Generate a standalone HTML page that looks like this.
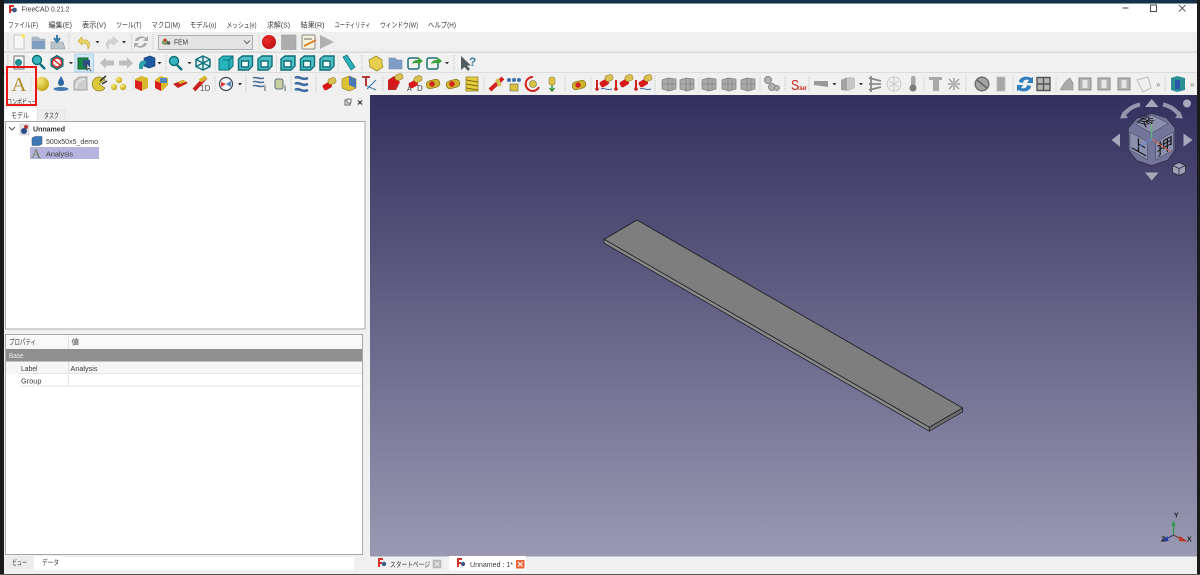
<!DOCTYPE html>
<html lang="ja"><head><meta charset="utf-8"><title>FreeCAD 0.21.2</title>
<style>
html,body{margin:0;padding:0;background:#fff;width:1200px;height:575px;overflow:hidden}
svg{display:block;filter:blur(.35px)}
text{font-family:"Liberation Sans","Noto Sans CJK JP",sans-serif;font-size:7.5px;fill:#3a3a3a}
</style></head><body>
<svg width="1200" height="575" viewBox="0 0 1200 575" xmlns="http://www.w3.org/2000/svg">
<defs>
<linearGradient id="bg" x1="0" y1="0" x2="0" y2="1"><stop offset="0" stop-color="#34305e"/><stop offset="1" stop-color="#9a99b2"/></linearGradient>
<radialGradient id="yb" cx=".35" cy=".3" r=".8"><stop offset="0" stop-color="#f6e97a"/><stop offset="1" stop-color="#c0a010"/></radialGradient>
<radialGradient id="rb" cx=".4" cy=".35" r=".8"><stop offset="0" stop-color="#ee2a2a"/><stop offset="1" stop-color="#b01010"/></radialGradient>
<g id="tealcube" fill="none" stroke="#0d6f78" stroke-width="1.400"><path d="M-7-4-3-7H7V3L3 7H-7Z" fill="#4fbfc6"/><path d="M-4-2H3V4H-4Z" fill="#f2fafa"/></g>
<g id="tealfull"><path d="M-7-4-3-7H7V3L3 7H-7Z" fill="#27b5bd" stroke="#0d6f78"/><path d="M3-3H-3M3-3V7M3-3 7-7" stroke="#0d6f78" fill="none"/></g>
<g id="zoomg"><circle cx="-1" cy="-2" r="4.500" fill="#37b6bd" stroke="#0d6f78" stroke-width="1.400"/><path d="M2 2 7 7" stroke="#0d6f78" stroke-width="2.400"/></g>
<g id="drop"><path d="M-2-1H2L0 1.400Z" fill="#333"/></g>
<g id="sep"><path d="M0-8V8" stroke="#c4c4c4" stroke-dasharray="1 1"/></g>
<g id="vs"><path d="M0-8V8" stroke="#dcdcdc"/></g>
<g id="yred"><rect x="-7" y="-2" width="9" height="6" rx="2" fill="#d81818" transform="rotate(-30)"/><rect x="-1" y="-6" width="8" height="6" rx="2.400" fill="#d9c050" stroke="#8a7a20" stroke-width=".5" transform="rotate(-20 3 -3)"/></g>
<g id="cyl"><rect x="-7" y="-4" width="14" height="8" rx="4" fill="#cfb22c" stroke="#7a6a18" stroke-width=".6" transform="rotate(-15)"/><circle cx="-1" r="2.700" fill="#d42020"/></g>
<g id="grayblk"><path d="M-7-4-1-6 7-5V5L0 7-7 5Z" fill="#a9a9a9" stroke="#808080" stroke-width=".7"/><path d="M-1-6V7M-7 0 7 0M3-5V6" stroke="#777" stroke-width=".6" fill="none"/></g>
<g id="gcyl"><path d="M-6-6H6V6H-6Z" fill="#b3b3b3" stroke="#888"/><rect x="-2.500" y="-4" width="5" height="8" fill="#e6e6e6"/></g>
</defs>

<rect width="1200" height="575" fill="#f0f0f0"/>
<rect width="1200" height="3.500" fill="#16304a"/>
<rect x="0" y="0" width="4" height="575" fill="#1a1a1a"/>
<rect x="1197" width="3" height="575" fill="#1b1b1b"/>
<rect y="574" width="1200" height="1" fill="#555"/>
<rect x="4" y="4" width="1193" height="28" fill="#fff"/>

<!-- titlebar -->
<path d="M9 5H14V7H11V9H13V11H11V13H9Z" fill="#d2322a"/>
<circle cx="14.500" cy="10" r="2.400" fill="#3b5a86"/>
<text x="21.500" y="11.500" textLength="48" lengthAdjust="spacingAndGlyphs">FreeCAD 0.21.2</text>
<path d="M1122.500 8H1128.500" stroke="#555" stroke-width="1.100"/>
<rect x="1150.500" y="5" width="6" height="6.500" fill="none" stroke="#555" stroke-width="1.100"/>
<path d="M1179 5 1185.500 11.500M1185.500 5 1179 11.500" stroke="#555" stroke-width=".9"/>

<!-- menu -->
<text x="8" y="27.500" textLength="30" lengthAdjust="spacingAndGlyphs">ファイル(F)</text>
<text x="48.500" y="27.500" textLength="23.500" lengthAdjust="spacingAndGlyphs">編集(E)</text>
<text x="82" y="27.500" textLength="24" lengthAdjust="spacingAndGlyphs">表示(V)</text>
<text x="116" y="27.500" textLength="25.500" lengthAdjust="spacingAndGlyphs">ツール(T)</text>
<text x="151.500" y="27.500" textLength="28.500" lengthAdjust="spacingAndGlyphs">マクロ(M)</text>
<text x="190" y="27.500" textLength="26.500" lengthAdjust="spacingAndGlyphs">モデル(o)</text>
<text x="226.500" y="27.500" textLength="30" lengthAdjust="spacingAndGlyphs">メッシュ(e)</text>
<text x="267" y="27.500" textLength="23" lengthAdjust="spacingAndGlyphs">求解(S)</text>
<text x="300.500" y="27.500" textLength="24" lengthAdjust="spacingAndGlyphs">結果(R)</text>
<text x="334.500" y="27.500" textLength="36" lengthAdjust="spacingAndGlyphs">ユーティリティ</text>
<text x="380" y="27.500" textLength="38" lengthAdjust="spacingAndGlyphs">ウィンドウ(W)</text>
<text x="428" y="27.500" textLength="28" lengthAdjust="spacingAndGlyphs">ヘルプ(H)</text>

<!-- toolbar rows -->
<rect x="4" y="32" width="1193" height="20" fill="#efefef"/>
<rect x="4" y="51.500" width="1193" height="1.500" fill="#dadada"/>
<rect x="4" y="53" width="1193" height="19" fill="#f1f1f1"/>
<rect x="4" y="72" width="1193" height="1" fill="#dcdcdc"/>
<rect x="4" y="73" width="1193" height="22" fill="#f0f0f0"/>

<!-- row 1 -->
<use href="#sep" x="8" y="42"/>
<path d="M14 35H22L24 37V49H14Z" fill="#f7f7f7" stroke="#bbb" stroke-width=".8"/><circle cx="23" cy="36" r="2.200" fill="#f6e96a"/>
<path d="M32 37H38L40 39H45V49H32Z" fill="#7f9dc0" stroke="#90a0b0" stroke-width=".6"/><path d="M32 37H38L40 39H45V41H32Z" fill="#aab8c6"/>
<path d="M51 42H63L65 49H51Z" fill="#b9c4cb" stroke="#8e989e" stroke-width=".6"/><path d="M57 35V41M54 38 57 42 60 38" stroke="#3a78a5" stroke-width="2" fill="none"/>
<use href="#sep" x="69" y="42"/>
<path d="M88 49C92 43 88 39 82 40V37L78 41 82 45V43C86 43 88 45 88 49Z" fill="#ecd56a" stroke="#c5a52c" stroke-width=".6"/>
<use href="#drop" x="97.500" y="42"/>
<path d="M108 49C104 43 108 39 113 40V37L118 41 113 45V43C110 43 108 45 108 49Z" fill="#d6d6d6" stroke="#bfbfbf" stroke-width=".6"/>
<use href="#drop" x="124" y="42"/>
<use href="#vs" x="131.500" y="42"/>
<path d="M135 41C136 36 143 35 146 38L148 36V41H143L145 39C143 37 139 38 138 41ZM147 43C146 48 139 49 136 46L134 48V43H139L137 45C139 47 143 46 144 43Z" fill="#a9a9a9"/>
<use href="#sep" x="153" y="42"/>
<rect x="158.500" y="35.500" width="94" height="14" fill="#e3e3e3" stroke="#aeaeae"/>
<path d="M162 41 166 39 169 42 166 45 162 44Z" fill="#7f9a5f"/><circle cx="165" cy="40" r="1.500" fill="#c53a2a"/><circle cx="168.500" cy="43" r="1.800" fill="#4f5a60"/>
<text x="174" y="44.500" textLength="14" lengthAdjust="spacingAndGlyphs">FEM</text>
<path d="M244 40.500 247 43.500 250 40.500" stroke="#666" fill="none"/>
<use href="#sep" x="259" y="42"/>
<circle cx="269" cy="42" r="7" fill="url(#rb)"/>
<rect x="281.500" y="35" width="14.500" height="14.500" fill="#adadad" stroke="#9d9d9d" stroke-width=".6"/>
<rect x="302" y="35" width="13" height="14" rx="1" fill="#f6f1dc" stroke="#8a8a8a"/><path d="M304 39H312" stroke="#666"/><path d="M304 46 316 40" stroke="#d6852c" stroke-width="2"/>
<path d="M320 35 334 42 320 49Z" fill="#b0b0b0"/>

<!-- row 2 -->
<use href="#sep" x="8" y="63"/>
<rect x="14" y="56" width="10" height="13" fill="#f4f4f4" stroke="#777"/><circle cx="18.500" cy="62.500" r="3.500" fill="#1f8d92"/>
<use href="#zoomg" x="38" y="62"/>
<path d="M51 59 57 55.500 63 59V66L57 69.500 51 66Z" fill="#1e8c94" stroke="#0b5e66"/><circle cx="57" cy="62.500" r="4.500" fill="#f6f6f6" stroke="#d22" stroke-width="1.400"/><path d="M54 60 60 65" stroke="#d22" stroke-width="1.400"/>
<use href="#drop" x="71" y="63"/>
<rect x="75" y="54" width="18.500" height="18" fill="#d2e8f5" stroke="#9ac6e3" stroke-width=".8"/>
<path d="M78 58H88V69H78Z" fill="#1a8744" stroke="#0d5c2c"/><rect x="83" y="60" width="7" height="7" fill="#2d4f86"/><path d="M87 63 87 70 89 68 91 71" stroke="#222" fill="#fff" stroke-width=".7"/>
<path d="M100 63 106 57.500V60.500H114V65.500H106V68.500Z" fill="#bdbdbd"/>
<path d="M133 63 127 57.500V60.500H119V65.500H127V68.500Z" fill="#bdbdbd"/>
<path d="M144 58 150 56 155 58V66L149 68 144 66Z" fill="#1f5aa0" stroke="#123a70" stroke-width=".6"/><path d="M139 65C140 61 142 60 146 61V64C144 64 143 66 143 69H139Z" fill="#2ba0aa"/>
<use href="#drop" x="159.500" y="63"/>
<use href="#sep" x="166" y="63"/>
<use href="#zoomg" x="175" y="63"/>
<use href="#drop" x="189.500" y="63"/>
<g transform="translate(203 63)" fill="none" stroke="#11757e" stroke-width="1.500"><path d="M0-7 7-3.500V3.500L0 7-7 3.500V-3.500Z" fill="#e4f1f1"/><path d="M-7-3.500 7 3.500M7-3.500-7 3.500M0-7V7"/></g>
<use href="#vs" x="215" y="63"/>
<use href="#tealfull" x="226" y="63"/>
<use href="#tealcube" x="245.500" y="63"/>
<use href="#tealcube" x="265" y="63"/>
<use href="#vs" x="276.500" y="63"/>
<use href="#tealcube" x="288" y="63"/>
<use href="#tealcube" x="307.500" y="63"/>
<use href="#tealcube" x="327" y="63"/>
<use href="#vs" x="338" y="63"/>
<path d="M343 57 347 55 355 67 351 70Z" fill="#2bb0b8" stroke="#0d6f78" stroke-width=".7"/>
<use href="#sep" x="362" y="63"/>
<path d="M369 60 376 56 382 60V64L383 67 377 71 370 67Z" fill="#e7cf4d" stroke="#a08a20" stroke-width=".8"/>
<path d="M389 58H395L397 60H402V69H389Z" fill="#7f9dc4" stroke="#7088a8" stroke-width=".6"/>
<rect x="408" y="58" width="11" height="11" rx="2" fill="#f4f4f4" stroke="#1f6f78" stroke-width="1.500"/><path d="M412 64C413 60 416 60 418 60V57L423 61 418 65V63C416 63 414 63 412 64Z" fill="#3aa03a"/>
<rect x="427" y="58" width="11" height="11" rx="2" fill="#f4f4f4" stroke="#1f6f78" stroke-width="1.500"/><path d="M431 64C432 60 435 60 437 60V57L442 61 437 65V63C435 63 433 63 431 64Z" fill="#3aa03a"/>
<use href="#drop" x="447" y="63"/>
<use href="#sep" x="454" y="63"/>
<path d="M461 56V70L464.500 67 468 71 470 69 467 65.500H471Z" fill="#4d5b62"/>
<text x="469" y="66" style="fill:#3c7ea8;font-size:12px;font-weight:bold">?</text>

<!-- row 3 -->
<use href="#vs" x="31" y="84"/>
<text x="11.500" y="91" style="font-family:'Liberation Serif',serif;font-size:20px;fill:#b08d2c" textLength="15" lengthAdjust="spacingAndGlyphs">A</text>
<circle cx="42" cy="84" r="7" fill="url(#yb)"/>
<path d="M61 76C63 80 64 81 64 83A3 3 0 0 1 58 83C58 81 59 80 61 76Z" fill="#2c66a4"/><ellipse cx="61" cy="89" rx="7.500" ry="2" fill="#4579ae"/>
<path d="M74 90V81L79 77H87V90Z" fill="#cdcdcd" stroke="#a4a4a4"/><path d="M76 88C77 82 80 79 85 79" stroke="#f5f5f5" fill="none"/>
<path d="M105 80A7 7 0 1 0 105 88L99 84Z" fill="#ddc83a" stroke="#8a7a20" stroke-width=".7"/><path d="M100 81 106 76M102 84 107 81" stroke="#333" stroke-width="1.600"/>
<circle cx="114" cy="87" r="3.200" fill="url(#yb)"/><circle cx="119" cy="80" r="3.200" fill="url(#yb)"/><circle cx="123" cy="87" r="3.200" fill="url(#yb)"/>
<use href="#sep" x="133" y="84"/>
<path d="M135 79 141 76 148 78V88L141 91 135 88Z" fill="#d8b92c"/><path d="M135 80 142 82V91L135 88Z" fill="#d81e1e"/>
<path d="M155 80 160 76 168 78V85L162 91 155 88Z" fill="#d8b92c"/><path d="M155 81 161 83V91L155 88Z" fill="#d81e1e"/><path d="M160 78H167V83H160Z" fill="#4f86c0"/>
<path d="M173 84 183 80 188 83 178 88Z" fill="#c82020"/><path d="M178 82 184 80 186 82 180 84Z" fill="#d8b92c"/>
<path d="M194 90 206 77" stroke="#c82020" stroke-width="4"/><path d="M200 81 206 77" stroke="#d8b92c" stroke-width="4"/>
<text x="200" y="91" style="font-size:8px;fill:#555">1D</text>
<use href="#sep" x="215" y="84"/>
<circle cx="226" cy="84" r="6.500" fill="#f3f3f3" stroke="#3a4a5a" stroke-width="1.200"/><path d="M221 82 226 84 221 87Z" fill="#d33"/><path d="M231 81 226 84 231 87Z" fill="#4b84c0"/>
<use href="#drop" x="240" y="84"/>
<use href="#sep" x="246" y="84"/>
<path d="M253 78C256 76 259 80 264 78M253 82C256 80 259 84 264 82M253 86C256 84 259 88 264 86" stroke="#4a6f9c" stroke-width="1.600" fill="none"/><text x="264" y="91" style="font-size:9px;fill:#244">i</text>
<rect x="275" y="79" width="8" height="10" rx="2" fill="#c7d0a0" stroke="#5e6f7f"/><text x="284" y="91" style="font-size:9px;fill:#244">i</text>
<use href="#vs" x="291" y="84"/>
<path d="M295 78C299 75 302 81 308 78M295 84C299 81 302 87 308 84M295 90C299 87 302 93 308 90" stroke="#3f6aa0" stroke-width="2.600" fill="none"/>
<use href="#sep" x="316" y="84"/>
<use href="#yred" x="329" y="84"/>
<path d="M342 79 349 76 356 79V88L349 91 342 88Z" fill="#dcc234" stroke="#8a7a20" stroke-width=".6"/><path d="M349 76 356 79V88L349 85Z" fill="#4a78b5"/>
<path d="M362 77H370M366 77V86" stroke="#b02222" stroke-width="1.800"/><path d="M367 89 376 80M367 86 376 90" stroke="#4a7fa8" stroke-width="1.200"/>
<use href="#sep" x="383" y="84"/>
<path d="M388 80 394 76 400 82 396 90H388Z" fill="#c82020"/><use href="#yred" x="396" y="80"/>
<use href="#yred" x="415" y="82"/><text x="407" y="91" style="font-size:7px;fill:#444">A</text><text x="417" y="91" style="font-size:8px;fill:#444">D</text>
<use href="#cyl" x="433" y="84"/>
<use href="#cyl" x="453" y="84"/>
<rect x="466" y="77" width="12" height="14" fill="#e3cd3e" stroke="#8a7a20" stroke-width=".7"/><path d="M466 80 478 82M466 84 478 86M466 88 478 90" stroke="#7a6a18"/>
<use href="#vs" x="484" y="84"/>
<path d="M490 90 503 78" stroke="#d02020" stroke-width="4"/><path d="M497 79 500 86" stroke="#d9c050" stroke-width="4"/>
<circle cx="514" cy="80" r="2" fill="#3e6fb0"/><circle cx="509" cy="80" r="2" fill="#3e6fb0"/><circle cx="519" cy="80" r="2" fill="#3e6fb0"/><rect x="510" y="84" width="8" height="7" fill="#d8c23c" stroke="#665" stroke-width=".6"/>
<path d="M533 77A7 7 0 1 0 539 87" fill="none" stroke="#d02020" stroke-width="2"/><circle cx="533" cy="84" r="3.500" fill="#d8c23c" stroke="#665" stroke-width=".6"/>
<rect x="549" y="77" width="6" height="8" rx="2" fill="#d8c23c" stroke="#887" stroke-width=".6"/><path d="M552 85V91M549.500 88 552 91 554.500 88" stroke="#35913c" stroke-width="1.400" fill="none"/>
<use href="#sep" x="565" y="84"/>
<use href="#cyl" x="579" y="85"/>
<use href="#vs" x="591" y="84"/>
<use href="#yred" x="606" y="81"/><path d="M597 80V88" stroke="#c22" stroke-width="2"/><circle cx="597" cy="89" r="1.800" fill="#c22"/><path d="M601 89C604 87 607 91 612 89" stroke="#46a" fill="none"/>
<use href="#yred" x="626" y="81"/><path d="M616 80V88" stroke="#c22" stroke-width="2"/><circle cx="616" cy="89" r="1.800" fill="#c22"/>
<use href="#yred" x="645" y="81"/><path d="M636 80V88" stroke="#c22" stroke-width="2"/><circle cx="636" cy="89" r="1.800" fill="#c22"/><path d="M640 89C643 87 646 91 651 89" stroke="#46a" fill="none"/>
<use href="#sep" x="655" y="84"/>
<use href="#grayblk" x="669" y="84"/>
<use href="#grayblk" x="687" y="84"/>
<use href="#vs" x="699" y="84"/>
<use href="#grayblk" x="709" y="84"/>
<use href="#grayblk" x="729" y="84"/>
<use href="#grayblk" x="748" y="84"/>
<use href="#vs" x="760" y="84"/>
<circle cx="768" cy="80" r="3.500" fill="#b0b0b0" stroke="#8a8a8a"/><circle cx="772" cy="87" r="3.500" fill="#b0b0b0" stroke="#8a8a8a"/><circle cx="777" cy="88" r="2.500" fill="#b0b0b0" stroke="#8a8a8a"/>
<use href="#sep" x="785" y="84"/>
<text x="791" y="90" style="font-size:15px;fill:#c8281e;font-family:'Liberation Sans',sans-serif" textLength="8" lengthAdjust="spacingAndGlyphs">S</text>
<text x="798" y="90" style="font-size:6px;fill:#c8281e" textLength="9">olver</text>
<use href="#sep" x="809" y="84"/>
<path d="M814 81H828V87L814 85Z" fill="#989898"/>
<use href="#drop" x="834.500" y="84"/>
<path d="M841 80 848 77 855 78V88L848 91 841 90Z" fill="#a2a2a2"/><path d="M848 77V91" stroke="#eee"/><path d="M848 77 855 78V88L848 91Z" fill="#c5c5c5"/>
<use href="#drop" x="861" y="84"/>
<path d="M869 78 881 81M869 84H881M869 90 881 87M871 76V92" stroke="#8a8a8a" stroke-width="1.800" fill="none"/>
<circle cx="894" cy="84" r="7" fill="#efefef" stroke="#c8c8c8"/><path d="M889 81 899 87M899 81 889 87M894 77V91" stroke="#c8c8c8"/>
<rect x="911" y="76" width="4.500" height="11" rx="2" fill="#a8a8a8"/><circle cx="913" cy="88" r="3.500" fill="#7c7c7c"/>
<use href="#vs" x="924" y="84"/>
<path d="M929 77H942V80H939V91H933V80H929Z" fill="#a8a8a8"/>
<g stroke="#8f8f8f" stroke-width="1.200"><path d="M948 84H960M954 78V90M949 79 959 89M959 79 949 89"/></g><circle cx="954" cy="84" r="3" fill="#b5b5b5"/>
<use href="#sep" x="966" y="84"/>
<circle cx="982" cy="84" r="6.800" fill="#a3a3a3" stroke="#6c6c6c" stroke-width="1.400"/><path d="M977 80 987 88" stroke="#666" stroke-width="1.700"/>
<rect x="997" y="77" width="8" height="14" fill="#a6a6a6" stroke="#c0c0c0"/>
<use href="#vs" x="1013" y="84"/>
<path d="M1019 82C1019 77 1027 75 1031 78L1033 77V83H1027L1029 80C1026 79 1023 80 1023 83ZM1031 86C1031 91 1023 93 1019 90L1017 91V85H1023L1021 88C1024 89 1027 88 1027 85Z" fill="#2f7fc0"/>
<path d="M1037 77.500H1050V90.500H1037ZM1043.500 77.500V90.500M1037 84H1050" fill="#b5b5b5" stroke="#555" stroke-width="1.400"/>
<use href="#vs" x="1056" y="84"/>
<path d="M1060 90C1063 85 1066 80 1070 78L1073 83 1073 90Z" fill="#ababab" stroke="#8b8b8b" stroke-width=".6"/>
<use href="#gcyl" x="1085" y="84"/>
<use href="#gcyl" x="1104" y="84"/>
<use href="#gcyl" x="1124" y="84"/>
<path d="M1137 80 1148 77 1151 88 1143 92Z" fill="#f0f0f0" stroke="#bdbdbd"/>
<text x="1156" y="87" style="font-size:8px;fill:#777">»</text>
<use href="#sep" x="1165" y="84"/>
<path d="M1171 78 1177 76 1185 78V90L1177 92 1171 90Z" fill="#2e8e96"/><rect x="1175" y="80" width="5" height="9" fill="#2a55a5"/>
<text x="1190" y="87" style="font-size:8px;fill:#777">»</text>

<!-- left dock -->
<rect x="4" y="95" width="366" height="462" fill="#f0f0f0"/>
<text x="7" y="104.500" textLength="30" lengthAdjust="spacingAndGlyphs">コンボビュー</text>
<rect x="345" y="100" width="5" height="5" fill="none" stroke="#555" stroke-width=".9"/><rect x="347" y="99" width="4" height="4" fill="#f0f0f0" stroke="#555" stroke-width=".8"/>
<path d="M358 100.500 362 104.500M362 100.500 358 104.500" stroke="#333" stroke-width="1.200"/>
<!-- tabs -->
<rect x="5" y="108" width="32" height="14" fill="#fff"/>
<rect x="37" y="110" width="28" height="12" fill="#ececec" stroke="#e0e0e0" stroke-width=".6"/>
<text x="11" y="118" textLength="18" lengthAdjust="spacingAndGlyphs">モデル</text>
<text x="44" y="118" textLength="15" lengthAdjust="spacingAndGlyphs">タスク</text>
<!-- tree -->
<rect x="5.500" y="121.500" width="359.500" height="207.500" fill="#fff" stroke="#a8a8a8"/>
<path d="M9 127 12 130 15 127" fill="none" stroke="#555" stroke-width="1"/>
<rect x="20" y="124" width="9" height="11" fill="#e8e8e8" stroke="#bbb" stroke-width=".5"/><circle cx="26" cy="127" r="2" fill="#b33"/><circle cx="24" cy="131" r="3" fill="#2c4c86"/>
<text x="33" y="131.500" textLength="32" lengthAdjust="spacingAndGlyphs" style="font-weight:bold;fill:#333">Unnamed</text>
<path d="M32 138 35 136.500H42V144L39 145.500H32Z" fill="#3f78b5" stroke="#2a4f80" stroke-width=".5"/>
<text x="46" y="144" textLength="52" lengthAdjust="spacingAndGlyphs">500x50x5_demo</text>
<rect x="30" y="147" width="69" height="12" fill="#b4b4de"/>
<text x="31" y="158" style="font-family:'Liberation Serif',serif;font-size:13px;fill:#6d7a5c" textLength="10" lengthAdjust="spacingAndGlyphs">A</text>
<text x="46" y="156.500" textLength="27" lengthAdjust="spacingAndGlyphs">Analysis</text>
<!-- props -->
<rect x="5.500" y="334.500" width="357" height="220" fill="#fff" stroke="#a8a8a8"/>
<rect x="6" y="335" width="356" height="14" fill="#f8f8f8"/>
<path d="M68.500 335V349" stroke="#e4e4e4"/>
<text x="9" y="344.500" textLength="27" lengthAdjust="spacingAndGlyphs">プロパティ</text>
<text x="71.500" y="344.500" textLength="7.500" lengthAdjust="spacingAndGlyphs">値</text>
<rect x="6" y="349" width="356" height="12.500" fill="#8f8f8f"/>
<text x="9" y="358" textLength="14.500" lengthAdjust="spacingAndGlyphs" style="fill:#eee">Base</text>
<rect x="6" y="361.500" width="356" height="12.500" fill="#f6f6f6"/>
<rect x="6" y="374" width="356" height="12.500" fill="#fff"/>
<path d="M19 373.500H362M19 386H362" stroke="#e6e6e6"/><path d="M68.500 361.500V386" stroke="#e4e4e4"/>
<text x="21" y="371" textLength="16.500" lengthAdjust="spacingAndGlyphs">Label</text>
<text x="70.500" y="371" textLength="27" lengthAdjust="spacingAndGlyphs">Analysis</text>
<text x="21" y="383.500" textLength="20.500" lengthAdjust="spacingAndGlyphs">Group</text>
<!-- bottom dock tabs -->
<rect x="65" y="557" width="289" height="13" fill="#fff"/>
<rect x="5" y="556" width="29" height="13" fill="#ececec"/>
<rect x="34" y="556" width="31" height="14" fill="#fff"/>
<text x="12" y="565" textLength="15" lengthAdjust="spacingAndGlyphs">ビュー</text>
<text x="42" y="565" textLength="17" lengthAdjust="spacingAndGlyphs">データ</text>

<!-- viewport -->
<rect x="370" y="95" width="827" height="461.500" fill="url(#bg)"/>
<path d="M637 220 604 239.300 929.300 427.300 962.700 408Z" fill="#7e7e7e" stroke="#1f1f28" stroke-width=".9" stroke-linejoin="round"/>
<path d="M604 239.300 929.300 427.300V431.200L604 243Z" fill="#8a8a8a" stroke="#1f1f28" stroke-width=".8" stroke-linejoin="round"/>
<path d="M929.300 427.300 962.700 408V411.800L929.300 431.200Z" fill="#6f6f6f" stroke="#1f1f28" stroke-width=".8" stroke-linejoin="round"/>

<!-- navicube -->
<g fill="#a6a8bc">
<path d="M1151.700 99 1158.500 107H1145Z"/>
<path d="M1145 172.500H1158.500L1151.700 180.500Z"/>
<path d="M1111.500 140 1120 133.500V146.700Z"/>
<path d="M1192.500 140 1183.500 133.500V146.700Z"/>
<circle cx="1187" cy="103.500" r="4"/>
</g>
<path d="M1123 116C1127 110 1133 106 1140 104.500" stroke="#9496ae" stroke-width="4" fill="none"/><path d="M1120 118.500 1128 118 1123 111Z" fill="#9496ae"/>
<path d="M1180 116C1176 110 1170 106 1163 104.500" stroke="#9496ae" stroke-width="4" fill="none"/><path d="M1183 118.500 1175 118 1180 111Z" fill="#9496ae"/>
<path d="M1136.700 118.300 1151.700 113.300 1166.700 118 1175 128V150L1168 160 1151.700 165.700 1136.700 160.700 1128.300 150V128Z" fill="#73759a" stroke="#2f2f48" stroke-width=".9"/>
<path d="M1151.700 115 1168.300 123.300 1151.700 133.300 1135.700 124.300Z" fill="#8d8fae" stroke="#3a3a55" stroke-width=".5"/>
<path d="M1130 132 1147.700 142V160L1130 150Z" fill="#8d8fae" stroke="#3a3a55" stroke-width=".5"/>
<path d="M1173.300 132 1155.700 142V160L1173.300 150Z" fill="#8d8fae" stroke="#3a3a55" stroke-width=".5"/>
<text transform="matrix(.72 .42 -.72 .42 1152 117)" x="-8" y="15" style="font-size:17px;fill:#111">後</text>
<text transform="matrix(1 .56 0 1 1130 132)" x="1" y="15" style="font-size:16px;fill:#111">上</text>
<text transform="matrix(1 -.56 0 1 1155.700 142)" x="1" y="15" style="font-size:16px;fill:#111">押</text>
<path d="M1151.700 139V124" stroke="#54c66c" stroke-width=".9"/><path d="M1151.700 139 1171 152" stroke="#d86a4a" stroke-width=".9"/><path d="M1151.700 139 1138 147" stroke="#5a8ae0" stroke-width=".9"/>
<path d="M1179 162.500 1185.500 165.500V172.500L1179 175.500 1172.500 172.500V165.500Z" fill="#9fa1b8" stroke="#2b2b3a" stroke-width=".8"/><path d="M1172.500 165.500 1179 168.500 1185.500 165.500M1179 168.500V175.500" stroke="#2b2b3a" stroke-width=".8" fill="none"/>

<!-- axis -->
<path d="M1173.500 535V523" stroke="#2a9a46" stroke-width="1.200"/><path d="M1173.500 520 1175.500 526H1171.500Z" fill="#2a9a46"/>
<path d="M1173.500 535 1181 539" stroke="#7a3b30" stroke-width="1"/><path d="M1180 537 1186 541 1179.500 540.500Z" fill="#d83a2a" stroke="#b03020"/>
<path d="M1173.500 535 1166 539" stroke="#303f88" stroke-width="1"/><path d="M1167 537 1162 541 1168 540.500Z" fill="#2a3a9a" stroke="#2a3a9a"/>
<text x="1174" y="517.500" style="font-size:7px;font-weight:bold;fill:#222">Y</text>
<text x="1187" y="541.500" style="font-size:7px;font-weight:bold;fill:#222">X</text>
<text x="1161" y="541.500" style="font-size:7px;font-weight:bold;fill:#222">Z</text>

<!-- doc tabs -->
<rect x="370" y="556.500" width="827" height="15" fill="#f0f0f0"/>
<rect x="449" y="556" width="77" height="14.500" fill="#fff"/>
<path d="M378 558H383V560H380V562H382V564H380V567H378Z" fill="#d2322a"/><circle cx="384" cy="564" r="2.200" fill="#3b5a86"/>
<text x="390" y="567" textLength="40" lengthAdjust="spacingAndGlyphs">スタートページ</text>
<rect x="433" y="560" width="8" height="8" fill="#bdbdbd" stroke="#aaa" stroke-width=".5"/><path d="M435 562 439 566M439 562 435 566" stroke="#eee" stroke-width=".9"/>
<path d="M457 558H462V560H459V562H461V564H459V567H457Z" fill="#d2322a"/><circle cx="463" cy="564" r="2.200" fill="#3b5a86"/>
<text x="470" y="567" textLength="43" lengthAdjust="spacingAndGlyphs">Unnamed : 1*</text>
<rect x="516" y="560" width="8.500" height="8.500" fill="#e8663a"/><path d="M518 562 522.500 566.500M522.500 562 518 566.500" stroke="#fff" stroke-width="1.100"/>

<!-- red annotation box -->
<rect x="7" y="67" width="29" height="38" fill="none" stroke="#ec1515" stroke-width="2"/>
</svg>
</body></html>
